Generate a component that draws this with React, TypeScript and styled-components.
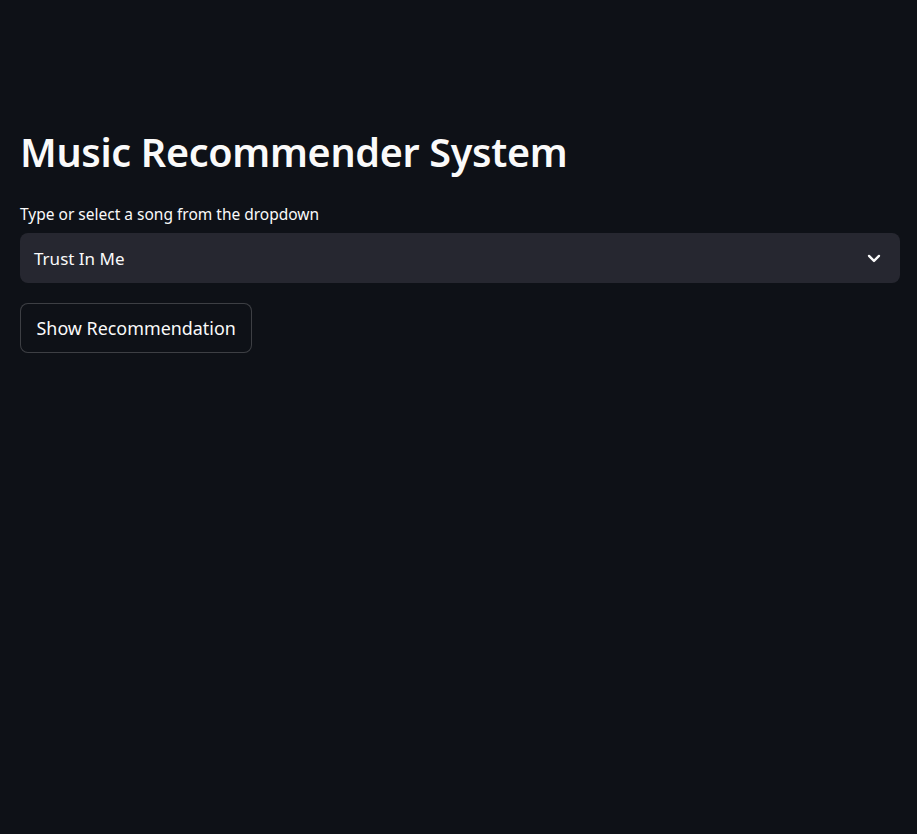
import React from "react";
import styled, { createGlobalStyle } from "styled-components";

const Global = createGlobalStyle`
  html, body { margin: 0; padding: 0; background: #0e1117; }
  body { font-family: "Noto Sans", "Liberation Sans", sans-serif; color: #fafafa; }
  #root { min-height: 834px; }
`;

const Main = styled.main`
  box-sizing: border-box;
  min-height: 834px;
  padding: 122px 17px 0 20px;
  display: flex;
  flex-direction: column;
`;

const Title = styled.h1`
  margin: 0;
  font-size: 39.5px;
  line-height: 60px;
  font-weight: 600;
  letter-spacing: -0.3px;
`;

const Label = styled.label`
  margin-top: 21px;
  font-size: 15.5px;
  line-height: 22px;
  display: block;
`;

const Select = styled.div`
  margin-top: 8px;
  height: 50px;
  border-radius: 8px;
  background: #262730;
  display: flex;
  align-items: center;
  justify-content: space-between;
  padding: 0 14px;
  font-size: 17px;
`;

const Chevron = styled.svg`
  width: 20px;
  height: 20px;
  display: block;
  margin-right: 2px;
`;

const Button = styled.button`
  margin-top: 20px;
  align-self: flex-start;
  height: 50px;
  padding: 0 15.5px;
  border-radius: 8px;
  border: 1px solid rgba(250, 250, 250, 0.2);
  background: #0e1117;
  color: #fafafa;
  font-family: inherit;
  font-size: 17.9px;
`;

export default function App() {
  return (
    <>
      <Global />
      <Main>
        <Title>Music Recommender System</Title>
        <Label>Type or select a song from the dropdown</Label>
        <Select>
          <span>Trust In Me</span>
          <Chevron viewBox="0 0 24 24" fill="none" stroke="#fafafa" strokeWidth={2.8} strokeLinecap="round" strokeLinejoin="round">
            <path d="M6 9.5l6 6 6-6" />
          </Chevron>
        </Select>
        <Button>Show Recommendation</Button>
      </Main>
    </>
  );
}
